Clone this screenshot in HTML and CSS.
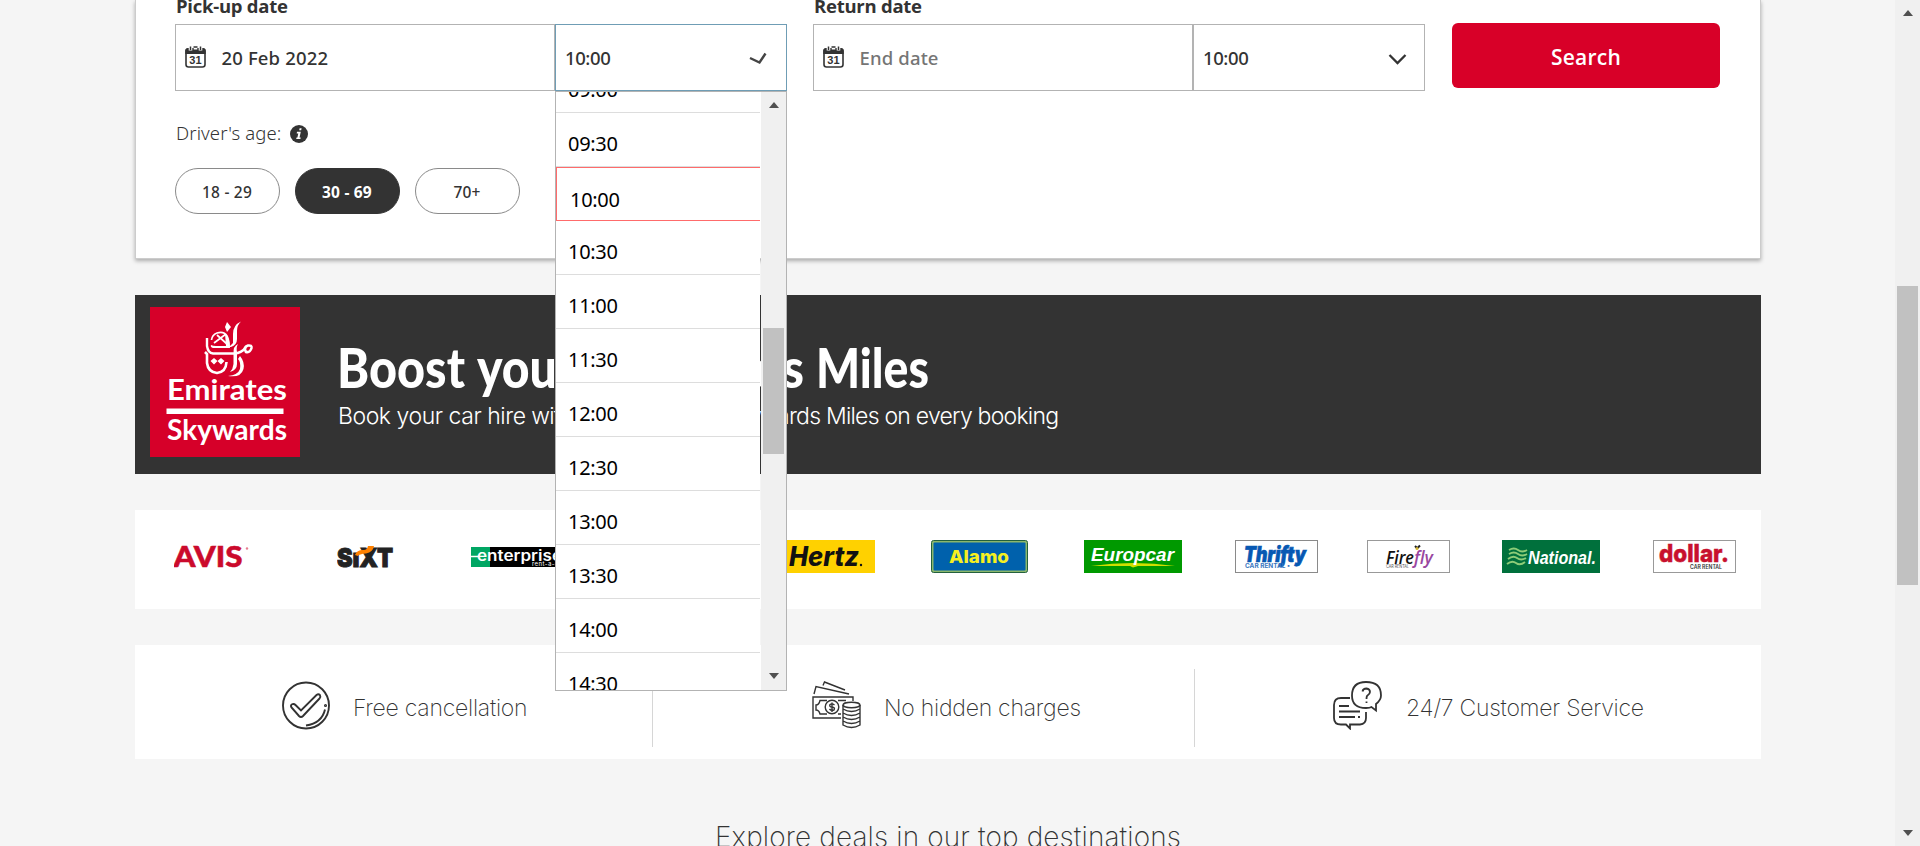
FILE: index.html
```html
<!DOCTYPE html>
<html lang="en">
<head>
<meta charset="utf-8">
<title>Car hire</title>
<link rel="stylesheet" href="styles.css">
</head>
<body>
<svg class="defs" width="0" height="0">
  <symbol id="calendar" viewBox="0 0 21 22">
    <rect x="1" y="3" width="19" height="18" rx="2.5" fill="#fff" stroke="#333" stroke-width="1.6"/>
    <path d="M.3 8V4.5Q.3 2 3 2H18Q20.700 2 20.700 4.500V8Z" fill="#333"/>
    <path d="M5.500 0V4.500M10.500 0V3.500M15.500 0V4.500" stroke="#fff" stroke-width="3.600"/>
    <path d="M5.500 .5V4M15.500 .5V4M8.500 1h4" stroke="#333" stroke-width="1.500"/>
    <text x="4.200" y="17.800" font-size="11" font-weight="700" font-family="Liberation Sans, sans-serif" fill="#333" textLength="12.500">31</text>
  </symbol>
</svg>
<div class="page">
  <main class="content">
    <section class="search-card">
      <div class="fields">
        <div class="group">
          <div class="label">Pick-up date</div>
          <div class="pair">
            <div class="date"><svg class="cal" width="21" height="22"><use href="#calendar"/></svg><span class="date-text">20 Feb 2022</span></div>
            <div class="time time-open"><span>10:00</span>
              <svg class="tick" width="18" height="13" viewBox="0 0 18 13"><path d="M1 6L10.500 10.500L16.500 1.500" fill="none" stroke="#444" stroke-width="2.400"/></svg>
              <div class="dropdown">
                <ul class="options">
                  <li>09:00</li><li>09:30</li><li class="selected">10:00</li><li>10:30</li><li>11:00</li><li>11:30</li><li>12:00</li><li>12:30</li><li>13:00</li><li>13:30</li><li>14:00</li><li>14:30</li>
                </ul>
                <div class="bar"><i class="up"></i><i class="thumb"></i><i class="down"></i></div>
              </div>
            </div>
          </div>
        </div>
        <div class="group">
          <div class="label label-return">Return date</div>
          <div class="pair">
            <div class="date"><svg class="cal" width="21" height="22"><use href="#calendar"/></svg><span class="date-text placeholder">End date</span></div>
            <div class="time"><span>10:00</span><svg class="chevron" width="19" height="12" viewBox="0 0 19 12"><path d="M1.500 2L9.500 10L17.500 2" fill="none" stroke="#333" stroke-width="2.300"/></svg></div>
          </div>
        </div>
        <button class="search">Search</button>
      </div>
      <div class="age-label">Driver's age:
        <svg width="18" height="18" viewBox="0 0 18 18"><circle cx="9" cy="9" r="9" fill="#333"/><path d="M9.600 3.200h2l-.4 2h-2zM7 6.800h3.800l-1.300 5.800h1.200l-.3 1.500H6.200l.3-1.500h.9l.9-4.200H6.700z" fill="#fff"/></svg>
      </div>
      <div class="pills"><span class="pill">18 - 29</span><span class="pill active">30 - 69</span><span class="pill">70+</span></div>
    </section>

    <section class="banner">
      <svg class="skywards" width="150" height="150" viewBox="0 0 150 150">
        <rect width="150" height="150" fill="#d60029"/>
        <g fill="none" stroke="#fff" stroke-width="2">
          <path d="M77 15l4 5-4 5-2-5z" fill="#fff" stroke="none"/>
          <path d="M91 14.500Q83 18 83 27V36L79 40H81Q87 38 87 32V24Q87 18 91 14.500Z" fill="#fff" stroke="none"/>
          <path d="M61.500 33Q62 28 67 26Q74 24 77 29Q79 33 79 40M64 36L76 27M67 28L77 37" stroke-width="1.700"/>
          <path d="M75 27Q80 31 80 41H63Q60 40 61 38Q63 39 66 39H76Z" fill="#fff" stroke="none"/>
          <path d="M57 31V39Q58 46 63 46.500H84Q92 46 96 40" stroke-width="2.400"/>
          <path d="M96 45Q93 40 98 38.500Q102 38 101.500 41Q100 46 96 45Z" stroke-width="2.600"/>
          <path d="M88 37Q83 39 83.500 47V57Q83 62 80 65Q87 63 87 57V45Q86 40 88 37Z" fill="#fff" stroke="none"/>
          <path d="M55 45L57 47V56Q58 65 67 66Q76 65 76.500 55" stroke-width="2.600"/>
          <path d="M90 49Q95 55 93.500 62Q91 71 78 69Q88 68 90 62Q91 55 88 52Z" fill="#fff" stroke="none"/>
          <path d="M60.500 54l3.500-3 3.500 3-3.500 3.500zM67.500 54l3.500-3 3.500 3-3.500 3.500z" fill="#fff" stroke="none"/>
        </g>
        <g fill="#fff" font-family="Lato, sans-serif" font-weight="700">
          <text x="17" y="92.500" font-size="29" textLength="120" lengthAdjust="spacingAndGlyphs">Emirates</text>
          <rect x="16.500" y="101.500" width="117" height="5.500"/>
          <text x="17" y="133" font-size="28" textLength="120" lengthAdjust="spacingAndGlyphs">Skywards</text>
        </g>
      </svg>
      <div class="banner-copy">
        <svg class="headline" width="600" height="62" viewBox="0 0 600 62">
          <g font-family="Lato, sans-serif" font-weight="900" font-size="56" fill="#fff">
            <text x="-2" y="50" textLength="128" lengthAdjust="spacingAndGlyphs">Boost</text>
            <text x="138" y="50" textLength="98" lengthAdjust="spacingAndGlyphs">your</text>
            <text x="253" y="50" textLength="212" lengthAdjust="spacingAndGlyphs">Skywards</text>
            <text x="477" y="50" textLength="113" lengthAdjust="spacingAndGlyphs">Miles</text>
          </g>
        </svg>
        <p class="tagline"><span class="lead">Book your car hire</span> with us and collect Skywards Miles on every booking</p>
      </div>
    </section>

    <section class="brands">
      <svg class="b-avis" width="76" height="33"><text x="-.5" y="27" font-family="Lato, sans-serif" font-weight="900" font-size="29" fill="#cb0a2c" stroke="#cb0a2c" stroke-width=".5" textLength="69" lengthAdjust="spacingAndGlyphs">AVIS</text><circle cx="73" cy="8.500" r="1.200" fill="#e77f90"/></svg>
      <svg class="b-sixt" width="57" height="33"><g font-family="Inter, sans-serif" font-weight="900" fill="#222" stroke="#222"><text x="0" y="27" font-size="26" textLength="56" lengthAdjust="spacingAndGlyphs">SıXT</text></g><path d="M18 15Q20 9.500 27 10Q30 10 31 6H37Q36 12 29 13.500Q22 14 21 16Z" fill="#ff8100"/></svg>
      <svg class="b-enterprise" width="99" height="33"><rect y="7" width="99" height="20" fill="#000"/><rect y="7" width="19" height="20" fill="#00a663"/><path d="M0 16.500h8" stroke="#fff" stroke-width="1.500"/><text x="6" y="20.500" font-family="Inter, sans-serif" font-weight="600" font-size="15" fill="#fff" textLength="85" lengthAdjust="spacingAndGlyphs">enterprise</text><text x="61" y="26" font-family="Inter, sans-serif" font-size="6" fill="#fff" textLength="33">rent-a-car</text></svg>
      <svg class="b-hertz" width="98" height="33"><rect width="98" height="33" fill="#ffd100"/><text x="12" y="26" font-family="Inter, sans-serif" font-weight="800" font-style="italic" font-size="26.500" fill="#111" textLength="70" lengthAdjust="spacingAndGlyphs">Hertz</text><circle cx="84" cy="25" r="1.200" fill="#111"/></svg>
      <svg class="b-alamo" width="97" height="33"><rect x=".5" y=".5" width="96" height="32" rx="2" fill="#8bb76b" stroke="#23613e"/><rect x="2.500" y="2.500" width="92" height="28" rx="1" fill="#0061ac"/><text x="18" y="23" font-family="Inter, sans-serif" font-weight="800" font-size="18" fill="#f5ef20" textLength="60" lengthAdjust="spacingAndGlyphs">Alamo</text></svg>
      <svg class="b-europcar" width="98" height="33"><rect width="98" height="33" fill="#009900"/><path d="M7 26Q49 20 91 26H54L49 27.500 46 26Z" fill="#d0df00"/><text x="7" y="20.500" font-family="Liberation Sans, sans-serif" font-weight="700" font-style="italic" font-size="19" fill="#fff" textLength="83" lengthAdjust="spacingAndGlyphs">Europcar</text></svg>
      <svg class="b-thrifty" width="83" height="33"><rect x=".5" y=".5" width="82" height="32" fill="#fff" stroke="#8a8a8a"/><text x="9" y="21.500" font-family="Inter, sans-serif" font-weight="900" font-style="italic" font-size="21.500" fill="#0758b3" stroke="#0758b3" stroke-width=".7" textLength="62" lengthAdjust="spacingAndGlyphs">Thrifty</text><text x="10" y="27.500" font-family="Inter, sans-serif" font-weight="700" font-size="6" fill="#3b79bf" textLength="45" lengthAdjust="spacingAndGlyphs">CAR RENTAL •</text></svg>
      <svg class="b-firefly" width="83" height="33"><rect x=".5" y=".5" width="82" height="32" fill="#fff" stroke="#999"/><g font-family="Open Sans, sans-serif" font-weight="600" font-style="italic" font-size="18"><text x="19" y="23.500" fill="#111" textLength="28" lengthAdjust="spacingAndGlyphs">Fire</text><text x="47" y="23.500" fill="#99479f" textLength="19" lengthAdjust="spacingAndGlyphs">fly</text></g><path d="M48 6l2 2M53 5.500l-3 3" stroke="#222" stroke-width="2"/><circle cx="50" cy="8.500" r="1.500" fill="#d5b532"/><text x="19" y="28" font-family="Inter, sans-serif" font-size="4.500" fill="#555" textLength="23" lengthAdjust="spacingAndGlyphs">CAR RENTAL</text></svg>
      <svg class="b-national" width="98" height="33"><rect width="98" height="33" fill="#00703c"/><path d="M7 10Q12 7 16 10T25 10M7 14Q12 11 16 14T25 14M6 19Q11 15 15 18T24 18M5 24Q10 20 14 23T23 22" fill="none" stroke="#8dcc78" stroke-width="1.900"/><text x="26" y="23.500" font-family="Liberation Sans, sans-serif" font-weight="700" font-style="italic" font-size="19" fill="#fff" textLength="68" lengthAdjust="spacingAndGlyphs">National.</text></svg>
      <svg class="b-dollar" width="83" height="33"><rect x=".5" y=".5" width="82" height="32" fill="#fff" stroke="#999"/><text x="6" y="21.500" font-family="Inter, sans-serif" font-weight="800" font-size="24" fill="#c8102e" stroke="#c8102e" stroke-width=".5" textLength="70" lengthAdjust="spacingAndGlyphs">dollar.</text><text x="37" y="28.500" font-family="Inter, sans-serif" font-weight="600" font-size="5.500" fill="#333" textLength="32" lengthAdjust="spacingAndGlyphs">CAR RENTAL</text></svg>
    </section>

    <section class="features">
      <div class="feature f-cancel">
        <svg width="48" height="49" viewBox="0 0 48 49" fill="none" stroke="#333" stroke-width="1.900"><circle cx="24" cy="24.500" r="23"/><path d="M9.500 26.500Q8 24 10.500 23.200Q12 22.500 13.500 24L19 29.500L34.500 14Q36.500 12.500 38 14.200Q39 16 37.500 17.500L21 35Q19 37 17 35Z"/><path d="M43 28.500Q40 42 24 44.500"/><circle cx="43.500" cy="24.500" r=".6"/></svg>
        <span class="t1">Free cancellation</span>
      </div>
      <div class="feature f-charges">
        <svg width="49" height="48" viewBox="0 0 49 48" fill="none" stroke="#333" stroke-width="1.400"><path d="M2 13L4 5.500L37 13M11 4.500L12.500 1L33 9M29 37H1V16H41V20"/><path d="M15 19.500H8Q7 24 4 24V29Q7 29 8 33H15M26 19.500H34M26 33H29" /><circle cx="20" cy="26" r="6.800"/><path d="M22.500 24Q20 22 18 23.500Q17 26 20 26Q23.500 26.500 22 29Q19 30 17.500 28M20 21.500V31"/><ellipse cx="39.500" cy="24" rx="8.500" ry="2.700"/><path d="M31 24V44Q39.500 49 48 44V24M31 28Q39.500 33 48 28M31 32Q39.500 37 48 32M31 36Q39.500 41 48 36M31 40Q39.500 45 48 40"/></svg>
        <span class="t2">No hidden charges</span>
      </div>
      <div class="feature f-service">
        <svg width="49" height="49" viewBox="0 0 49 49" fill="none" stroke="#333" stroke-width="1.800"><path d="M33 1Q19 1 19 14.500Q19 27 33 27Q37 27 38.500 26L43 29.500V23Q48 19 48 14.500Q48 1 33 1Z"/><path d="M29.500 10.500Q30 7.500 33.500 7.500Q37 8 37 11Q37 13 34 15Q33.500 16 33.500 18M33.500 20.500V22"/><path d="M17 17H8Q1 17 1 24V37Q1 43.500 8 43.500H13L17 47.500V43.500H27Q33 43 33 37V31M6 25H16M6 30.500H27M6 36H22M25 36H27"/></svg>
        <span class="t3">24/7 Customer Service</span>
      </div>
    </section>
    <h2 class="explore">Explore deals in our top destinations</h2>
  </main>
  <div class="page-scroll"><i class="up"></i><i class="thumb"></i><i class="down"></i></div>
</div>
</body>
</html>
```
FILE: styles.css
```css
* { box-sizing: border-box; }
html, body { height: 846px; overflow: hidden; }
body { margin: 0; background: #f5f5f5; color: #333; font-family: "Open Sans", "Noto Sans", sans-serif; }
.defs { position: absolute; }
svg { display: block; flex: none; }
.page { display: flex; height: 846px; }
.content { width: 1895px; height: 846px; padding: 0 134px 0 135px; overflow: hidden; }

.search-card { height: 259px; padding-left: 40px; background: #fff; border: 1px solid #ccc; border-top: 0; box-shadow: 0 2px 4px rgba(0,0,0,.3); }
.fields { display: flex; align-items: flex-start; margin-left: -1px; }
.group { width: 612px; margin-right: 26px; }
.label { height: 24px; line-height: 12px; padding-left: 1px; font-size: 18.500px; font-weight: 700; letter-spacing: -.25px; }
.pair { display: flex; }
.date, .time { display: flex; align-items: center; height: 67px; border: 1px solid #b3b3b3; font-size: 18.500px; font-weight: 500; font-family: "Noto Sans", "Open Sans", sans-serif; }
.date { width: 380px; padding-left: 9px; letter-spacing: .15px; }
.cal { margin-top: -1px; }
.date-text { margin-left: 15.500px; }
.placeholder { color: #757575; }
.time { width: 232px; padding-left: 9px; justify-content: space-between; letter-spacing: -.4px; }
.time-open { position: relative; border-color: #6f9db5; }
.tick { margin: 2px 19px 0 0; }
.chevron { margin: 3px 17px 0 0; }
.search { width: 268px; height: 65px; margin: 23px 0 0 1px; padding-top: 3px; border: 0; border-radius: 6px; background: #d80028; color: #fff; font: 600 21px "Open Sans", sans-serif; letter-spacing: .2px; }

.dropdown { position: absolute; z-index: 2; left: -1px; top: 66px; width: 232px; height: 600px; display: flex; justify-content: space-between; border: 1px solid #b3b3b3; letter-spacing: 0; font-weight: 400; }
.options { width: 204px; height: 598px; margin: 0; padding: 0; overflow: hidden; list-style: none; color: #000; font-size: 20px; }
.options li { height: 54px; padding: 17px 0 0 12px; border-bottom: 1px solid #ddd; background: #fff; line-height: 27px; letter-spacing: -.3px; }
.options li:first-child { margin-top: -33px; }
.options .selected { border: 1px solid #ff6b6b; border-right: 0; padding: 18px 0 0 13px; }
.bar { width: 25px; background: #f0f0f0; display: flex; flex-direction: column; align-items: center; }
.bar .up { margin-top: 10px; }
.bar .thumb { width: 21px; height: 126px; margin-top: 220px; background: #c1c1c1; }
.bar .down { margin-top: 219px; }
.up, .down { border: 5.500px solid transparent; }
.up { border-bottom: 6px solid #505050; border-top: 0; }
.down { border-top: 6px solid #505050; border-bottom: 0; }

.age-label { display: flex; gap: 9px; align-items: center; height: 28px; margin-top: 27px; font: 350 18.500px "Noto Sans", sans-serif; letter-spacing: .1px; }
.age-label svg { margin-top: 4px; }
.pills { display: flex; gap: 15px; margin: 22px 0 0 -1px; }
.pill { width: 105px; height: 46px; border: 1px solid #8a8a8a; border-radius: 23px; display: flex; align-items: center; justify-content: center; padding: 2px 1px 0 0; font: 500 15.500px "Noto Sans", sans-serif; letter-spacing: .2px; }
.pill.active { background: #333; border-color: #333; color: #fff; font-weight: 700; }

.banner { display: flex; height: 179px; margin-top: 36px; padding: 12px 15px; background: #333; color: #fff; }
.banner-copy { margin-left: 39px; padding-top: 31px; }
.tagline { margin: 1px 0 0 -1px; line-height: 30px; white-space: nowrap; font-family: Inter, sans-serif; font-weight: 300; font-size: 23px; letter-spacing: -.77px; }
.lead { letter-spacing: -.45px; }

.brands { display: flex; align-items: center; height: 99px; margin-top: 36px; padding: 0 0 6px 39px; background: #fff; }
.b-sixt { margin-left: 87px; }
.b-enterprise { margin-left: 77px; }
.b-hertz { margin-left: 207px; }
.b-alamo, .b-europcar { margin-left: 56px; }
.b-thrifty { margin-left: 53px; }
.b-firefly { margin-left: 49px; }
.b-national { margin-left: 52px; }
.b-dollar { margin-left: 53px; }

.features { display: grid; grid-template-columns: 518px 542px 566px; height: 114px; margin-top: 36px; padding: 24px 0 12px; background: #fff; }
.feature { display: flex; align-items: flex-start; border-right: 1px solid #d6d6d6; font-family: Inter, sans-serif; font-size: 23px; font-weight: 250; line-height: 30px; letter-spacing: -.25px; white-space: nowrap; padding-top: 12px; }
.feature:last-child { border: 0; }
.feature span { margin-top: 12px; }
.f-cancel { padding-left: 147px; }
.t1 { margin-left: 23px; }
.f-charges { padding-left: 159px; }
.t2 { margin-left: 23px; }
.f-service { padding-left: 138px; }
.t3 { margin-left: 24px; }
.explore { margin: 58px 0 0; text-align: center; font: 250 28px/40px Inter, sans-serif; letter-spacing: .12px; }

.page-scroll { width: 25px; background: #f0f0f0; display: flex; flex-direction: column; align-items: center; }
.page-scroll .up { margin-top: 10px; }
.page-scroll .thumb { width: 21px; height: 299px; margin-top: 270px; background: #c1c1c1; }
.page-scroll .down { margin-top: 245px; }
```
